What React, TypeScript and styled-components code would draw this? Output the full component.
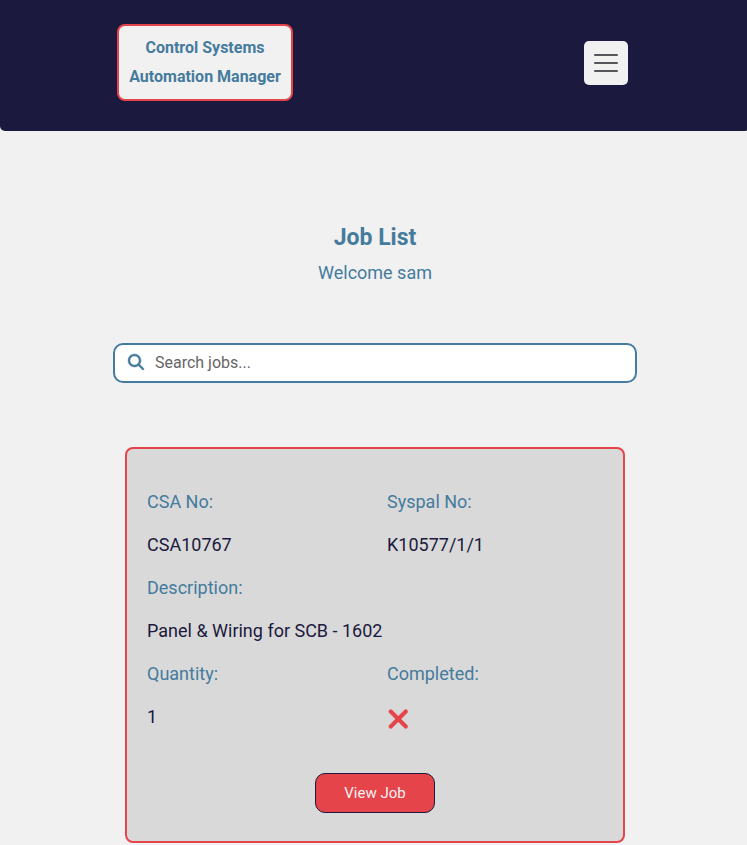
import React from "react";
import styled, { createGlobalStyle } from "styled-components";
import { FaMagnifyingGlass, FaXmark } from "react-icons/fa6";

const Global = createGlobalStyle`
  * { box-sizing: border-box; }
  html, body { margin: 0; background: #f1f1f1; }
  body { height: 845px; overflow: hidden; font-family: Roboto, sans-serif; color: #1b193d; }
`;
const Header = styled.header`
  width: 750px; height: 131px; background: #1b193d; border-radius: 0 0 5px 5px;
  display: flex; justify-content: space-between; align-items: flex-start;
  padding: 24px 122px 0 117px;
`;
const Brand = styled.a`
  width: 176px; height: 77px; border: 2px solid #e6444b; border-radius: 8px;
  background: #f1f1f1; color: #457b9d; font-size: 16px; font-weight: 700;
  line-height: 29px; text-align: center; padding-top: 7px; white-space: nowrap;
`;
const MenuButton = styled.button`
  width: 44px; height: 44px; margin: 17px 0 0; padding: 7px; border: 0;
  border-radius: 5px; background: #f1f1f1;
  svg { display: block; }
`;
const Main = styled.main`
  display: flex; flex-direction: column; align-items: center; padding-left: 3px;
`;
const Title = styled.h1`
  margin: 92px 0 0; font-size: 23px; line-height: 30px; font-weight: 700; color: #457b9d;
`;
const Welcome = styled.p`
  margin: 5px 0 0; font-size: 18px; line-height: 29px; color: #457b9d;
`;
const Search = styled.label`
  width: 524px; height: 40px; margin-top: 56px; border: 2px solid #457b9d;
  border-radius: 10px; background: #fff; display: flex; align-items: center;
  padding: 0 0 2px 13px; gap: 11px; color: #457b9d;
  svg { stroke: currentColor; stroke-width: 12px; overflow: visible; }
`;
const SearchInput = styled.input`
  flex: 1; min-width: 0; border: 0; outline: 0; padding: 0; background: transparent;
  font: 16px Roboto, sans-serif;
  &::placeholder { color: #666; opacity: 1; }
`;
const Card = styled.section`
  width: 500px; height: 396px; margin-top: 64px; border: 2px solid #e6444b;
  border-radius: 8px; background: #d9d9d9; padding: 31px 16px 0 20px;
  display: flex; flex-direction: column;
`;
const Details = styled.div`
  display: grid; grid-template-columns: 240px 1fr; grid-auto-rows: 43px;
  font-size: 18px; line-height: 43px;
`;
const Cell = styled.div<{ $label?: boolean; $wide?: boolean }>`
  color: ${p => (p.$label ? "#457b9d" : "#1b193d")};
  grid-column: ${p => (p.$wide ? "1 / -1" : "auto")};
`;
const Status = styled(Cell)`
  display: flex; align-items: center; color: #e6444b; padding-top: 4px;
  svg { width: 22.5px; height: 30px; stroke: currentColor; stroke-width: 10px; }
`;
const ViewButton = styled.button`
  width: 120px; height: 40px; margin: 35px 4px 0 0; align-self: center;
  border: 1px solid #1b193d; border-radius: 10px; background: #e6444b;
  color: #f1f1f1; font: 15px Roboto, sans-serif; padding: 0 0 1px;
`;

export default function App() {
  return (
    <>
      <Global />
      <Header>
        <Brand>Control Systems<br />Automation Manager</Brand>
        <MenuButton aria-label="Menu">
          <svg width="30" height="30" viewBox="0 0 30 30">
            <path d="M4 7h22M4 15h22M4 23h22" stroke="#55565a" strokeWidth="2" strokeLinecap="round" />
          </svg>
        </MenuButton>
      </Header>
      <Main>
        <Title>Job List</Title>
        <Welcome>Welcome sam</Welcome>
        <Search>
          <FaMagnifyingGlass size={16} />
          <SearchInput placeholder="Search jobs..." />
        </Search>
        <Card>
          <Details>
            <Cell $label>CSA No:</Cell>
            <Cell $label>Syspal No:</Cell>
            <Cell>CSA10767</Cell>
            <Cell>K10577/1/1</Cell>
            <Cell $label $wide>Description:</Cell>
            <Cell $wide>Panel &amp; Wiring for SCB - 1602</Cell>
            <Cell $label>Quantity:</Cell>
            <Cell $label>Completed:</Cell>
            <Cell>1</Cell>
            <Status><FaXmark /></Status>
          </Details>
          <ViewButton>View Job</ViewButton>
        </Card>
      </Main>
    </>
  );
}
